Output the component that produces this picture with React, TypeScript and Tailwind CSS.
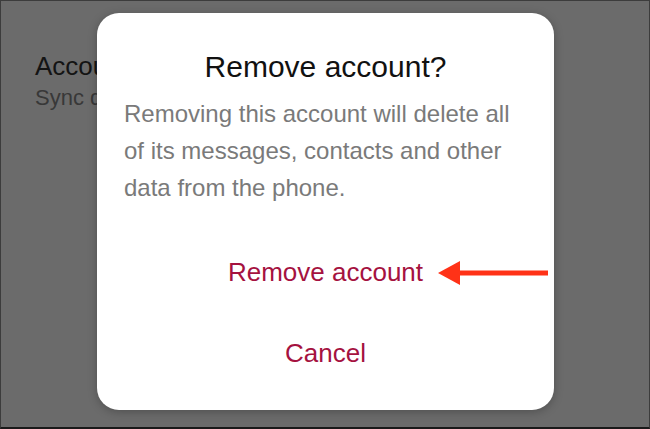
import React from "react";

function Arrow() {
  return (
    <svg width="112" height="26" viewBox="0 0 112 26" className="absolute left-[436px] top-[259px]">
      <path d="M1 13 L23 1 L23 25 Z" fill="#ff3217" />
      <rect x="20" y="10.5" width="91" height="5" fill="#ff3217" />
    </svg>
  );
}

export default function App() {
  return (
    <div
      className="relative w-[650px] h-[429px] overflow-hidden bg-[#6b6b6b] border border-[#3c3c3c] border-b-2 border-b-[#1a1a1a]"
      style={{ fontFamily: '"Liberation Sans", Arial, sans-serif' }}
    >
      {/* Settings list behind the overlay */}
      <div className="pt-[48px] pl-[34px]">
        <div className="text-[26px] leading-[34px] text-[#141414]">Accounts</div>
        <div className="text-[22px] leading-[30px] text-[#383838]">Sync data</div>
      </div>

      {/* Dialog */}
      <div className="absolute left-[96px] top-[12px] w-[457px] h-[397px] bg-white rounded-[22px] shadow-[0_2px_10px_rgba(0,0,0,0.25)] flex flex-col">
        <h2 className="pt-[36px] text-center text-[30px] leading-[36px] text-[#111]">Remove account?</h2>
        <p className="mt-[10px] px-[27px] text-[24px] leading-[37px] text-[#7a7a7a]">
          Removing this account will delete all of its messages, contacts and other data from the phone.
        </p>
        <div className="mt-[50px] flex flex-col items-center gap-[49px]">
          <button className="text-[26px] leading-[32px] text-[#a5123f]">Remove account</button>
          <button className="text-[26px] leading-[32px] text-[#a5123f]">Cancel</button>
        </div>
      </div>

      <Arrow />
    </div>
  );
}
